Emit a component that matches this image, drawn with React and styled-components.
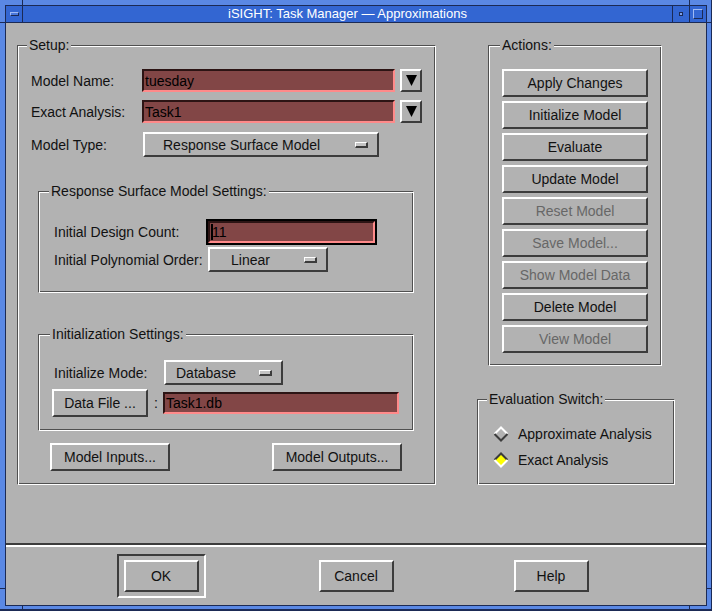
import React from 'react'
import styled, { createGlobalStyle } from 'styled-components'

const GlobalStyle = createGlobalStyle`
  html, body {
    margin: 0;
    padding: 0;
    background: #b2b2b2;
  }
  body {
    font-family: "Liberation Sans", Arial, sans-serif;
    font-size: 14px;
    color: #111;
  }
`

const actions = [
  { label: 'Apply Changes' },
  { label: 'Initialize Model' },
  { label: 'Evaluate' },
  { label: 'Update Model' },
  { label: 'Reset Model', off: true },
  { label: 'Save Model...', off: true },
  { label: 'Show Model Data', off: true },
  { label: 'Delete Model' },
  { label: 'View Model', off: true },
]

const notches = [
  { x: 22, y: 0, w: 1, h: 5 },
  { x: 689, y: 0, w: 1, h: 5 },
  { x: 0, y: 22, w: 5, h: 1 },
  { x: 707, y: 22, w: 5, h: 1 },
  { x: 0, y: 588, w: 5, h: 1 },
  { x: 707, y: 588, w: 5, h: 1 },
  { x: 22, y: 606, w: 1, h: 5 },
  { x: 689, y: 606, w: 1, h: 5 },
]

function DownArrow() {
  return (
    <svg width="11" height="11" viewBox="0 0 11 11">
      <polygon points="0,0 11,0 5.5,11" fill="#000" />
    </svg>
  )
}

function Diamond({ on }) {
  const top = on ? '#3c3c3c' : '#fff'
  const bottom = on ? '#fff' : '#3c3c3c'
  return (
    <svg width="16" height="16" viewBox="0 0 16 16">
      <polygon points="1,8 8,1 15,8 8,15" fill={on ? '#ffff00' : '#b2b2b2'} />
      <polyline points="1.5,8 8,1.5 14.5,8" fill="none" stroke={top} strokeWidth="2" />
      <polyline points="1.5,8 8,14.5 14.5,8" fill="none" stroke={bottom} strokeWidth="2" />
    </svg>
  )
}

function App() {
  return (
    <>
      <GlobalStyle />
      <Window>
        {notches.map((n, i) => (
          <Notch key={i} $x={n.x} $y={n.y} $w={n.w} $h={n.h} />
        ))}
        <Inner>
          <TitleBar>
            <TitleBox $left>
              <MenuGlyph />
            </TitleBox>
            <Title>iSIGHT: Task Manager — Approximations</Title>
            <TitleBox>
              <MinGlyph />
            </TitleBox>
            <TitleBox>
              <MaxGlyph />
            </TitleBox>
          </TitleBar>

          <Content>
            <Main>
              <SetupGroup>
                <Legend $indent={-4}>Setup:</Legend>
                <FormRow $h={23} $mb={8}>
                  <Label $w={111}>Model Name:</Label>
                  <Field>tuesday</Field>
                  <ArrowButton><DownArrow /></ArrowButton>
                </FormRow>
                <FormRow $h={23} $mb={9}>
                  <Label $w={111}>Exact Analysis:</Label>
                  <Field>Task1</Field>
                  <ArrowButton><DownArrow /></ArrowButton>
                </FormRow>
                <FormRow $h={25}>
                  <Label $w={112}>Model Type:</Label>
                  <OptionMenu $w={236} $pad={18}>
                    <OptionText>Response Surface Model</OptionText>
                    <Indicator />
                  </OptionMenu>
                </FormRow>

                <ResponseGroup>
                  <Legend $indent={-5}>Response Surface Model Settings:</Legend>
                  <FormRow $h={22} $mb={4}>
                    <Label $w={154}>Initial Design Count:</Label>
                    <Field $w={167} $h={22} $focus>
                      <Caret />11
                    </Field>
                  </FormRow>
                  <FormRow $h={25}>
                    <Label $w={154}>Initial Polynomial Order:</Label>
                    <OptionMenu $w={120} $pad={21}>
                      <OptionText>Linear</OptionText>
                      <Indicator />
                    </OptionMenu>
                  </FormRow>
                </ResponseGroup>

                <InitGroup>
                  <Legend $indent={11}>Initialization Settings:</Legend>
                  <FormRow $h={25} $mb={4} $indent={15}>
                    <Label $w={110}>Initialize Mode:</Label>
                    <OptionMenu $w={119} $pad={10}>
                      <OptionText>Database</OptionText>
                      <Indicator />
                    </OptionMenu>
                  </FormRow>
                  <FormRow $h={28} $indent={13}>
                    <PushButton $w={96}>Data File ...</PushButton>
                    <Colon>:</Colon>
                    <Field $w={236} $h={22}>Task1.db</Field>
                  </FormRow>
                </InitGroup>

                <ModelButtons>
                  <PushButton $w={120}>Model Inputs...</PushButton>
                  <PushButton $w={130}>Model Outputs...</PushButton>
                </ModelButtons>
              </SetupGroup>

              <Side>
                <ActionsGroup>
                  <Legend $indent={-2}>Actions:</Legend>
                  <ButtonStack>
                    {actions.map((a) => (
                      <PushButton key={a.label} $w={146} disabled={a.off}>
                        {a.label}
                      </PushButton>
                    ))}
                  </ButtonStack>
                </ActionsGroup>

                <EvalGroup>
                  <Legend $indent={-6}>Evaluation Switch:</Legend>
                  <RadioRow $mb={6}>
                    <Diamond />
                    <span>Approximate Analysis</span>
                  </RadioRow>
                  <RadioRow>
                    <Diamond on />
                    <span>Exact Analysis</span>
                  </RadioRow>
                </EvalGroup>
              </Side>
            </Main>

            <Separator />

            <ButtonBar>
              <DefaultRing>
                <DialogButton>OK</DialogButton>
              </DefaultRing>
              <DialogButton>Cancel</DialogButton>
              <DialogButton>Help</DialogButton>
            </ButtonBar>
          </Content>
        </Inner>
      </Window>
    </>
  )
}

export default App

const Window = styled.div`
  position: relative;
  box-sizing: border-box;
  width: 712px;
  height: 611px;
  padding: 5px;
  background: #5a88e4;
  box-shadow: inset 0 -2px 0 #1b2a55, inset -1px 0 0 #1b2a55;
  display: flex;
  flex-direction: column;
`

const Notch = styled.span`
  position: absolute;
  left: ${(p) => p.$x}px;
  top: ${(p) => p.$y}px;
  width: ${(p) => p.$w}px;
  height: ${(p) => p.$h}px;
  background: #1b2a55;
`

const Inner = styled.div`
  flex: 1;
  min-height: 0;
  display: flex;
  flex-direction: column;
  border: 1px solid #1b2a55;
`

const TitleBar = styled.div`
  height: 16px;
  display: flex;
  background: #3366d2;
  border-bottom: 1px solid #1b2a55;
`

const TitleBox = styled.div`
  width: 16px;
  flex: none;
  display: flex;
  align-items: center;
  justify-content: center;
  ${(p) => (p.$left ? 'border-right: 1px solid #1b2a55;' : 'border-left: 1px solid #1b2a55;')}
`

const MenuGlyph = styled.span`
  box-sizing: border-box;
  width: 9px;
  height: 4px;
  border: 1px solid;
  border-color: #9fbaf5 #1b2a55 #1b2a55 #9fbaf5;
  background: #4a78dc;
`

const MinGlyph = styled.span`
  box-sizing: border-box;
  width: 4px;
  height: 4px;
  border: 1px solid #1b2a55;
  background: #7ea0ea;
`

const MaxGlyph = styled.span`
  box-sizing: border-box;
  width: 10px;
  height: 10px;
  border: 1px solid;
  border-color: #9fbaf5 #1b2a55 #1b2a55 #9fbaf5;
`

const Title = styled.div`
  flex: 1;
  text-align: center;
  color: #fff;
  font-size: 13px;
  line-height: 16px;
  white-space: nowrap;
`

const Content = styled.div`
  flex: 1;
  display: flex;
  flex-direction: column;
  background: #b2b2b2;
`

const Main = styled.div`
  box-sizing: border-box;
  height: 520px;
  flex: none;
  display: flex;
  align-items: flex-start;
  gap: 41px;
  padding: 14px 31px 0 11px;
`

const Group = styled.fieldset`
  box-sizing: border-box;
  margin: 0;
  min-width: 0;
  border: 1px solid;
  border-color: #505050 #fff #fff #505050;
  box-shadow: inset 1px 1px 0 #fff, inset -1px -1px 0 #505050;
`

const Legend = styled.legend`
  margin-left: ${(p) => p.$indent}px;
  padding: 0 2px;
  line-height: 16px;
  background: #b2b2b2;
  white-space: nowrap;
`

const SetupGroup = styled(Group)`
  width: 419px;
  padding: 16px 13px 13px;
`

const ResponseGroup = styled(Group)`
  margin: 26px 8px 0 7px;
  padding: 22px 0 20px 15px;
`

const InitGroup = styled(Group)`
  margin: 33px 8px 0 7px;
  padding: 18px 0 13px 0;
`

const ActionsGroup = styled(Group)`
  margin: 0 13px 0 11px;
  padding: 16px 13px 12px;
`

const EvalGroup = styled(Group)`
  margin-top: 25px;
  padding: 17px 0 14px 15px;
`

const Side = styled.div`
  width: 198px;
  flex: none;
  display: flex;
  flex-direction: column;
`

const FormRow = styled.div`
  display: flex;
  align-items: center;
  height: ${(p) => p.$h}px;
  margin-bottom: ${(p) => p.$mb || 0}px;
  padding-left: ${(p) => p.$indent || 0}px;
`

const Label = styled.span`
  width: ${(p) => p.$w}px;
  flex: none;
  white-space: nowrap;
`

const Field = styled.div`
  box-sizing: border-box;
  height: ${(p) => p.$h || 23}px;
  ${(p) => (p.$w ? `width: ${p.$w}px; flex: none;` : 'flex: 1;')}
  display: flex;
  align-items: center;
  padding: 0 2px 0 1px;
  background: #824646;
  border: 2px solid;
  border-color: #2c1414 #ff8a8a #ff8a8a #2c1414;
  color: #000;
  white-space: nowrap;
  ${(p) => p.$focus && 'outline: 2px solid #000;'}
`

const Caret = styled.span`
  width: 2px;
  height: 16px;
  margin-right: -1px;
  background: #000;
`

const Raised = `
  box-sizing: border-box;
  background: #b2b2b2;
  border: 2px solid;
  border-color: #fff #3c3c3c #3c3c3c #fff;
`

const ArrowButton = styled.div`
  ${Raised}
  width: 22px;
  height: 23px;
  margin-left: 5px;
  flex: none;
  display: flex;
  align-items: center;
  justify-content: center;
`

const OptionMenu = styled.div`
  ${Raised}
  width: ${(p) => p.$w}px;
  height: 25px;
  flex: none;
  display: flex;
  align-items: center;
  padding: 0 9px 0 ${(p) => p.$pad}px;
`

const OptionText = styled.span`
  flex: 1;
  white-space: nowrap;
`

const Indicator = styled.span`
  box-sizing: border-box;
  width: 13px;
  height: 6px;
  border: 1px solid;
  border-right-width: 2px;
  border-bottom-width: 2px;
  border-color: #fff #3c3c3c #3c3c3c #fff;
  background: #c4c4c4;
`

const PushButton = styled.button`
  ${Raised}
  width: ${(p) => p.$w}px;
  height: 28px;
  flex: none;
  padding: 0;
  font: inherit;
  color: #111;
  white-space: nowrap;

  &:disabled {
    color: #676767;
  }
`

const Colon = styled.span`
  margin: 0 5px 0 6px;
`

const ModelButtons = styled.div`
  display: flex;
  justify-content: space-between;
  margin-top: 12px;
  padding: 0 20px 0 19px;
`

const ButtonStack = styled.div`
  display: flex;
  flex-direction: column;
  gap: 4px;
`

const RadioRow = styled.div`
  display: flex;
  align-items: center;
  gap: 9px;
  height: 20px;
  margin-bottom: ${(p) => p.$mb || 0}px;
  white-space: nowrap;
`

const Separator = styled.div`
  flex: none;
  border-top: 2px solid #3c3c3c;
  border-bottom: 2px solid #fff;
`

const ButtonBar = styled.div`
  flex: 1;
  display: grid;
  grid-template-columns: repeat(3, 195px);
  justify-content: center;
  justify-items: center;
  align-items: center;
`

const DefaultRing = styled.div`
  border: 2px solid;
  border-color: #3c3c3c #fff #fff #3c3c3c;
  padding: 4px 5px;
`

const DialogButton = styled.button`
  ${Raised}
  width: 75px;
  height: 32px;
  padding: 0;
  font: inherit;
  color: #111;
`
